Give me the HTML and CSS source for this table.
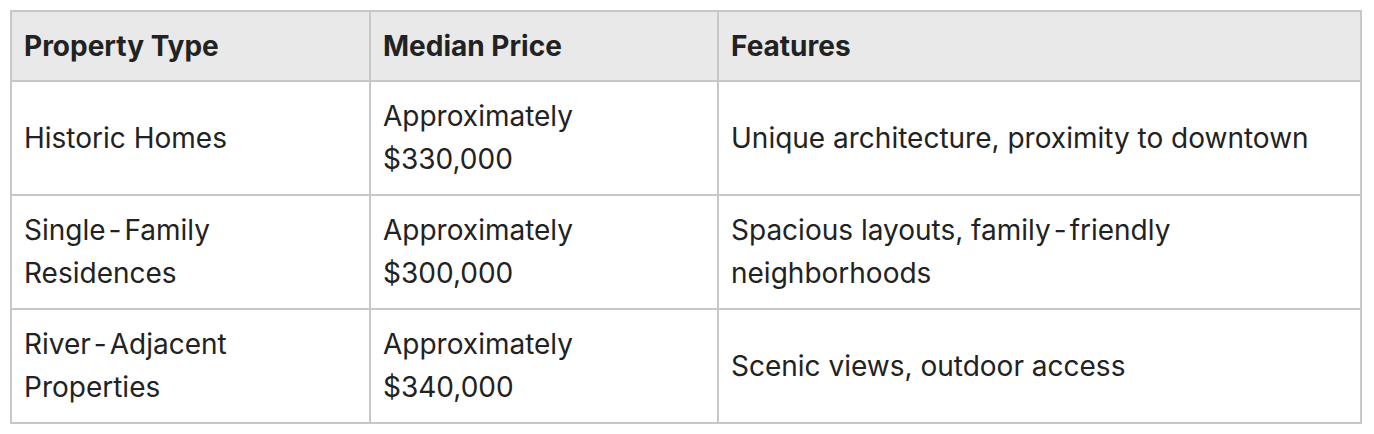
FILE: index.html
```html
<!DOCTYPE html>
<html>
<head>
<meta charset="utf-8">
<link rel="stylesheet" href="styles.css">
</head>
<body>
<table class="tbl">
  <colgroup>
    <col class="c1">
    <col class="c2">
    <col class="c3">
  </colgroup>
  <thead>
    <tr><th>Property Type</th><th>Median Price</th><th>Features</th></tr>
  </thead>
  <tbody>
    <tr><td>Historic Homes</td><td>Approximately<br>$330,000</td><td>Unique architecture, proximity to downtown</td></tr>
    <tr><td>Single<span class="hy">-</span>Family<br>Residences</td><td>Approximately<br>$300,000</td><td>Spacious layouts, family<span class="hy">-</span>friendly<br>neighborhoods</td></tr>
    <tr><td>River<span class="hy">-</span>Adjacent<br>Properties</td><td>Approximately<br>$340,000</td><td>Scenic views, outdoor access</td></tr>
  </tbody>
</table>
</body>
</html>
```

FILE: styles.css
```css
html, body { margin: 0; padding: 0; background: #fff; }
body { padding: 10px; }
.tbl {
  border-collapse: collapse;
  width: 1350px;
  table-layout: fixed;
  font-family: Inter, "Noto Sans", sans-serif;
  font-size: 28px;
  line-height: 43px;
  color: #222;
}
.c1 { width: 359px; }
.c2 { width: 348px; }
.c3 { width: 643px; }
.tbl th, .tbl td {
  border: 2px solid #c8c8c8;
  text-align: left;
  vertical-align: middle;
}
.tbl th {
  background: #e9e9e9;
  font-weight: 700;
  padding: 13px 12px 12px;
}
.tbl td { padding: 13px 12px; }
.hy { margin: 0 3px; }
```
